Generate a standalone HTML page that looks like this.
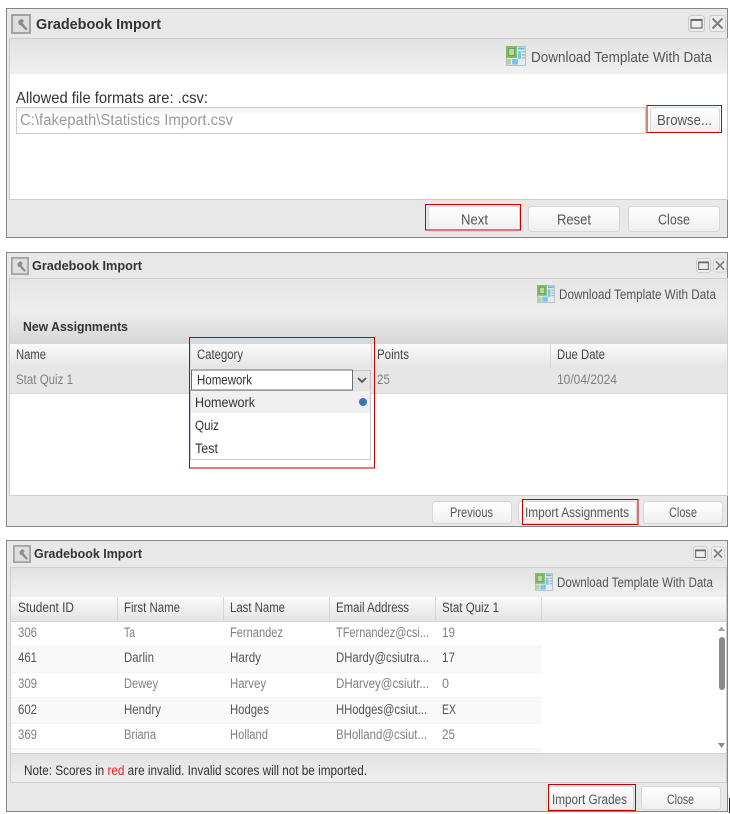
<!DOCTYPE html>
<html lang="en"><head><meta charset="utf-8"><title>Gradebook Import</title>
<style>
html,body{margin:0;padding:0;background:#fff;width:730px;height:814px;overflow:hidden}
svg{display:block}
text{font-family:"Liberation Sans",sans-serif;font-size:13.500px;fill:#555;filter:blur(.3px)}
use{filter:blur(.35px)}
.t{font-weight:bold;fill:#333}
.h{fill:#444}
.g{fill:#808080}
.d{fill:#555}
.b{fill:#555}
.k{fill:#333}
.red{fill:none;stroke:#c00000;stroke-width:1}
.btn{fill:url(#gb);stroke:#d6d6d6}
.sep{stroke:#d6d6d6;stroke-width:1}
</style></head><body>
<svg width="730" height="814" viewBox="0 0 730 814" xmlns="http://www.w3.org/2000/svg">
<defs>
<linearGradient id="gb" x1="0" y1="0" x2="0" y2="1"><stop offset="0" stop-color="#fff"/><stop offset="1" stop-color="#efefef"/></linearGradient>
<linearGradient id="tb" x1="0" y1="0" x2="0" y2="1"><stop offset="0" stop-color="#e2e2e2"/><stop offset="1" stop-color="#f0f0f0"/></linearGradient>
<linearGradient id="tb2" x1="0" y1="0" x2="0" y2="1"><stop offset="0" stop-color="#e6e6e6"/><stop offset=".5" stop-color="#ededed"/><stop offset="1" stop-color="#d6d6d6"/></linearGradient>
<linearGradient id="hd" x1="0" y1="0" x2="0" y2="1"><stop offset="0" stop-color="#fafafa"/><stop offset="1" stop-color="#e4e4e4"/></linearGradient>
<linearGradient id="nt" x1="0" y1="0" x2="0" y2="1"><stop offset="0" stop-color="#e2e2e2"/><stop offset="1" stop-color="#efefef"/></linearGradient>
<linearGradient id="ip" x1="0" y1="0" x2="0" y2="1"><stop offset="0" stop-color="#eef0f0"/><stop offset=".3" stop-color="#fff"/></linearGradient>
<symbol id="ico" viewBox="0 0 20 20">
<rect x="1" y="1" width="18" height="18" fill="#dedede" stroke="#a3a3a3" stroke-width="2"/>
<path d="M7 7.500L10.500 4.500L13 7L11.500 9L16.500 15L15 16.500L9.500 11L8 11Z" fill="#8b8b8b"/>
</symbol>
<symbol id="xl" viewBox="0 0 20 20">
<rect x="0.500" y="0.500" width="19" height="19" fill="#e3ecec" stroke="#b8c2c2"/>
<rect x="0" y="0" width="11" height="12" fill="#86bb62"/>
<rect x="2.500" y="2.500" width="6" height="7" fill="#b9d7a5" stroke="#5f9550" stroke-width=".8"/>
<rect x="12" y="1.500" width="6.500" height="2" fill="#5cb8e6"/>
<rect x="12" y="5" width="3" height="8" fill="#78c6ea"/>
<rect x="16" y="5" width="3" height="1.500" fill="#a9b9b9"/>
<rect x="16" y="8" width="3" height="1.500" fill="#a9b9b9"/>
<rect x="16" y="11" width="3" height="1.500" fill="#a9b9b9"/>
<rect x="6" y="13" width="6" height="5.500" fill="#7cc5ea"/>
<rect x="1" y="13" width="4" height="5.500" fill="#b5d2a0"/>
</symbol>
<symbol id="mx" viewBox="0 0 17 17">
<rect x=".5" y=".5" width="16" height="16" rx="3" fill="#eeeeee" stroke="#c9c9c9"/>
<rect x="3" y="4.500" width="11" height="8.500" fill="none" stroke="#6a6a6a" stroke-width="1.200"/>
<rect x="3" y="4" width="11" height="2" fill="#6a6a6a"/>
</symbol>
<symbol id="cl" viewBox="0 0 17 17">
<rect x=".5" y=".5" width="16" height="16" rx="3" fill="#eeeeee" stroke="#c9c9c9"/>
<path d="M3.500 3.500L13.500 13.500M13.500 3.500L3.500 13.500" stroke="#808080" stroke-width="2" fill="none"/>
</symbol>
</defs>

<!-- WINDOW 1 -->
<rect x="6.500" y="8.500" width="721" height="229" fill="#e8e8e8" stroke="#858585"/>
<rect x="9.500" y="38.500" width="718" height="161" fill="#fff" stroke="#cfcaca"/>
<rect x="10" y="39" width="717" height="35" fill="url(#tb)"/>
<use href="#ico" x="11" y="14" width="20" height="20"/>
<text class="t" x="36" y="29" style="font-size:14.500px" textLength="125" lengthAdjust="spacingAndGlyphs">Gradebook Import</text>
<use href="#mx" x="688" y="15" width="17" height="17"/>
<use href="#cl" x="709" y="15" width="17" height="17"/>
<use href="#xl" x="506" y="46" width="20" height="20"/>
<text class="d" x="531" y="62" style="font-size:15px" textLength="181" lengthAdjust="spacingAndGlyphs">Download Template With Data</text>
<text class="k" x="16" y="103" style="font-size:15.500px" textLength="192" lengthAdjust="spacingAndGlyphs">Allowed file formats are: .csv:</text>
<rect x="16.500" y="107.500" width="629" height="26" fill="url(#ip)" stroke="#c9cbd6"/>
<text class="g" x="20" y="125" style="font-size:15.500px;fill:#999" textLength="213" lengthAdjust="spacingAndGlyphs">C:\fakepath\Statistics Import.csv</text>
<rect class="btn" x="650.500" y="107.500" width="69" height="25" rx="3"/>
<text class="b" x="657" y="125" style="font-size:15px" textLength="55" lengthAdjust="spacingAndGlyphs">Browse...</text>
<rect class="red" x="647" y="105.500" width="74.500" height="27"/>
<rect class="btn" x="428.500" y="206.500" width="91" height="25" rx="3"/>
<rect class="btn" x="528.500" y="206.500" width="91" height="25" rx="3"/>
<rect class="btn" x="628.500" y="206.500" width="91" height="25" rx="3"/>
<text class="b" x="461" y="224.500" style="font-size:15px" textLength="27" lengthAdjust="spacingAndGlyphs">Next</text>
<text class="b" x="557" y="224.500" style="font-size:15px" textLength="34" lengthAdjust="spacingAndGlyphs">Reset</text>
<text class="b" x="658" y="224.500" style="font-size:15px" textLength="32" lengthAdjust="spacingAndGlyphs">Close</text>
<rect class="red" x="425.500" y="204.500" width="95" height="25.500"/>

<!-- WINDOW 2 -->
<rect x="6.500" y="252.500" width="721" height="274" fill="#e8e8e8" stroke="#858585"/>
<rect x="9.500" y="278.500" width="718" height="217" fill="#fff" stroke="#cfcfcf"/>
<rect x="10" y="279" width="717" height="65" fill="url(#tb2)"/>
<use href="#ico" x="11" y="257" width="18" height="18"/>
<text class="t" x="32" y="270" style="font-size:13px" textLength="110" lengthAdjust="spacingAndGlyphs">Gradebook Import</text>
<use href="#mx" x="696" y="258" width="15" height="15"/>
<use href="#cl" x="713" y="258" width="14" height="15"/>
<use href="#xl" x="537" y="285" width="18" height="18"/>
<text class="d" x="559" y="299" textLength="157" lengthAdjust="spacingAndGlyphs">Download Template With Data</text>
<text class="t" x="23" y="331" style="font-size:13px" textLength="105" lengthAdjust="spacingAndGlyphs">New Assignments</text>
<rect x="10" y="344" width="717" height="24" fill="url(#hd)"/>
<path class="sep" d="M190.500 344V368M371.500 344V368M550.500 344V368"/>
<rect x="10" y="368" width="717" height="25" fill="#e6e6e6"/>
<path d="M10 393.500H727" stroke="#d8d8d8"/>
<text class="h" x="16" y="359" textLength="30" lengthAdjust="spacingAndGlyphs">Name</text>
<text class="h" x="197" y="359" textLength="46" lengthAdjust="spacingAndGlyphs">Category</text>
<text class="h" x="377" y="359" textLength="32" lengthAdjust="spacingAndGlyphs">Points</text>
<text class="h" x="557" y="359" textLength="48" lengthAdjust="spacingAndGlyphs">Due Date</text>
<text class="g" x="16" y="384" textLength="57" lengthAdjust="spacingAndGlyphs">Stat Quiz 1</text>
<text class="g" x="377" y="384" textLength="13" lengthAdjust="spacingAndGlyphs">25</text>
<text class="g" x="557" y="384" textLength="60" lengthAdjust="spacingAndGlyphs">10/04/2024</text>
<rect x="190.500" y="390.500" width="180" height="69" fill="#fff" stroke="#c8c8d2"/>
<rect x="191" y="391" width="179" height="22" fill="#f0f0f0"/>
<rect x="353" y="370" width="18" height="21" fill="#e4e4e4"/>
<path d="M353 370.500H370.500V390" fill="none" stroke="#c4c4c4"/>
<path d="M358 378L362 382L366 378" fill="none" stroke="#555" stroke-width="1.800"/>
<rect x="191.500" y="370" width="161" height="20" fill="#fff" stroke="#6e6e6e"/>
<text class="k" x="197" y="384.500" textLength="55" lengthAdjust="spacingAndGlyphs">Homework</text>
<text class="k" x="195" y="407" style="font-size:14px" textLength="60" lengthAdjust="spacingAndGlyphs">Homework</text>
<text class="k" x="195" y="430" style="font-size:14px" textLength="24" lengthAdjust="spacingAndGlyphs">Quiz</text>
<text class="k" x="195" y="453" style="font-size:14px" textLength="23" lengthAdjust="spacingAndGlyphs">Test</text>
<circle cx="363" cy="402" r="4" fill="#3d74b5"/>
<rect class="red" x="189.500" y="337.500" width="185" height="130.500"/>
<rect class="btn" x="432.500" y="501.500" width="79" height="22" rx="3"/>
<rect class="btn" x="518.500" y="501.500" width="118" height="22" rx="3"/>
<rect class="btn" x="643.500" y="501.500" width="79" height="22" rx="3"/>
<text class="b" x="450" y="517" textLength="43" lengthAdjust="spacingAndGlyphs">Previous</text>
<text class="b" x="525" y="517" textLength="104" lengthAdjust="spacingAndGlyphs">Import Assignments</text>
<text class="b" x="669" y="517" textLength="28" lengthAdjust="spacingAndGlyphs">Close</text>
<rect class="red" x="522.500" y="499.500" width="115.500" height="25"/>

<!-- WINDOW 3 -->
<rect x="6.500" y="540.500" width="721" height="271" fill="#e8e8e8" stroke="#858585"/>
<rect x="10.500" y="567.500" width="716" height="215" fill="#fff" stroke="#cfcfcf"/>
<rect x="11" y="568" width="715" height="29" fill="url(#tb)"/>
<use href="#ico" x="13" y="545" width="18" height="18"/>
<text class="t" x="34" y="558" style="font-size:13px" textLength="108" lengthAdjust="spacingAndGlyphs">Gradebook Import</text>
<use href="#mx" x="693" y="546" width="15" height="15"/>
<use href="#cl" x="711" y="546" width="14" height="15"/>
<use href="#xl" x="535" y="573" width="18" height="18"/>
<text class="d" x="557" y="587" textLength="156" lengthAdjust="spacingAndGlyphs">Download Template With Data</text>
<rect x="11" y="597" width="715" height="24" fill="url(#hd)"/>
<path d="M11 621.500H726" stroke="#d4d4d4"/>
<path class="sep" d="M117.500 597V621M223.500 597V621M329.500 597V621M435.500 597V621M541.500 597V621"/>
<rect x="11" y="646" width="531" height="26" fill="#f9f9f9"/>
<rect x="11" y="697" width="531" height="26" fill="#f9f9f9"/>
<rect x="11" y="748" width="531" height="5" fill="#f9f9f9"/>
<path d="M11 646.500H542M11 672.500H542M11 697.500H542M11 723.500H542M11 748.500H542" stroke="#f4f4f4"/>
<text class="h" x="18" y="612" textLength="56" lengthAdjust="spacingAndGlyphs">Student ID</text>
<text class="h" x="124" y="612" textLength="56" lengthAdjust="spacingAndGlyphs">First Name</text>
<text class="h" x="230" y="612" textLength="55" lengthAdjust="spacingAndGlyphs">Last Name</text>
<text class="h" x="336" y="612" textLength="73" lengthAdjust="spacingAndGlyphs">Email Address</text>
<text class="h" x="442" y="612" textLength="57" lengthAdjust="spacingAndGlyphs">Stat Quiz 1</text>

<text class="g" x="18" y="637" textLength="19" lengthAdjust="spacingAndGlyphs">306</text>
<text class="g" x="124" y="637" textLength="11" lengthAdjust="spacingAndGlyphs">Ta</text>
<text class="g" x="230" y="637" textLength="53" lengthAdjust="spacingAndGlyphs">Fernandez</text>
<text class="g" x="336" y="637" textLength="93" lengthAdjust="spacingAndGlyphs">TFernandez@csi...</text>
<text class="g" x="442" y="637" textLength="13" lengthAdjust="spacingAndGlyphs">19</text>

<text class="d" x="18" y="662" textLength="19" lengthAdjust="spacingAndGlyphs">461</text>
<text class="d" x="124" y="662" textLength="30" lengthAdjust="spacingAndGlyphs">Darlin</text>
<text class="d" x="230" y="662" textLength="31" lengthAdjust="spacingAndGlyphs">Hardy</text>
<text class="d" x="336" y="662" textLength="93" lengthAdjust="spacingAndGlyphs">DHardy@csiutra...</text>
<text class="d" x="442" y="662" textLength="13" lengthAdjust="spacingAndGlyphs">17</text>

<text class="g" x="18" y="688" textLength="19" lengthAdjust="spacingAndGlyphs">309</text>
<text class="g" x="124" y="688" textLength="34" lengthAdjust="spacingAndGlyphs">Dewey</text>
<text class="g" x="230" y="688" textLength="36" lengthAdjust="spacingAndGlyphs">Harvey</text>
<text class="g" x="336" y="688" textLength="93" lengthAdjust="spacingAndGlyphs">DHarvey@csiutr...</text>
<text class="g" x="442" y="688" textLength="7" lengthAdjust="spacingAndGlyphs">0</text>

<text class="d" x="18" y="714" textLength="19" lengthAdjust="spacingAndGlyphs">602</text>
<text class="d" x="124" y="714" textLength="37" lengthAdjust="spacingAndGlyphs">Hendry</text>
<text class="d" x="230" y="714" textLength="39" lengthAdjust="spacingAndGlyphs">Hodges</text>
<text class="d" x="336" y="714" textLength="91" lengthAdjust="spacingAndGlyphs">HHodges@csiut...</text>
<text class="d" x="442" y="714" textLength="14" lengthAdjust="spacingAndGlyphs">EX</text>

<text class="g" x="18" y="739" textLength="19" lengthAdjust="spacingAndGlyphs">369</text>
<text class="g" x="124" y="739" textLength="32" lengthAdjust="spacingAndGlyphs">Briana</text>
<text class="g" x="230" y="739" textLength="38" lengthAdjust="spacingAndGlyphs">Holland</text>
<text class="g" x="336" y="739" textLength="91" lengthAdjust="spacingAndGlyphs">BHolland@csiut...</text>
<text class="g" x="442" y="739" textLength="13" lengthAdjust="spacingAndGlyphs">25</text>

<path d="M718 631H725L721.500 626.500Z" fill="#a0a0a0"/>
<rect x="719" y="637" width="6" height="53" rx="3" fill="#8a8a8a"/>
<path d="M718 743H725L721.500 748Z" fill="#8a8a8a"/>
<rect x="11" y="753" width="715" height="29" fill="url(#nt)"/>
<path d="M11 753.500H726" stroke="#cfcfcf"/>
<text class="k" x="24" y="775" textLength="343" lengthAdjust="spacingAndGlyphs">Note: Scores in <tspan style="fill:#ee1c25">red</tspan> are invalid. Invalid scores will not be imported.</text>
<rect class="btn" x="546.500" y="786.500" width="87" height="23" rx="3"/>
<rect class="btn" x="641.500" y="786.500" width="79" height="23" rx="3"/>
<text class="b" x="552" y="804" textLength="75" lengthAdjust="spacingAndGlyphs">Import Grades</text>
<text class="b" x="667" y="804" textLength="27" lengthAdjust="spacingAndGlyphs">Close</text>
<rect class="red" x="548.500" y="784.500" width="87" height="26"/>
<rect x="729" y="798" width="1" height="15" fill="#222"/>
</svg>
</body></html>
